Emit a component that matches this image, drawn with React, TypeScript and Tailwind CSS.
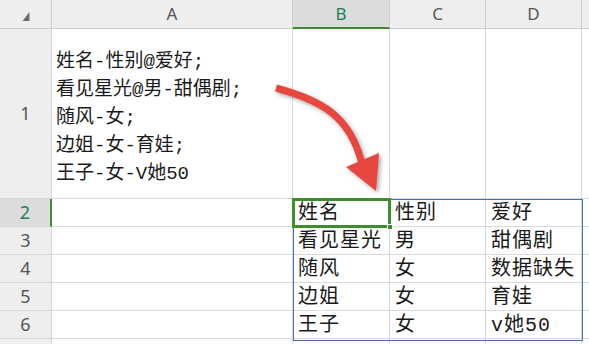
import React from 'react';

const cols = ['A', 'B', 'C', 'D'];

const table: string[][] = [
  ['姓名', '性别', '爱好'],
  ['看见星光', '男', '甜偶剧'],
  ['随风', '女', '数据缺失'],
  ['边姐', '女', '育娃'],
  ['王子', '女', 'v她50'],
];

const a1Lines = ['姓名-性别@爱好;', '看见星光@男-甜偶剧;', '随风-女;', '边姐-女-育娃;', '王子-女-V她50'];

const cellFont = { fontFamily: '"Liberation Mono", "Noto Sans CJK SC", monospace' };
const headFont = { fontFamily: '"Noto Sans", "Liberation Sans", sans-serif' };

const App: React.FC = () => {
  return (
    <div className="relative w-[589px] h-[344px] overflow-hidden bg-white">
      <div className="grid grid-cols-[52px_241px_97px_96px_96px_1fr] grid-rows-[29px_170px_28px_28px_28px_28px_28px_1fr] h-full">
        {/* header row */}
        <div className="bg-[#eeeeee] border-r border-b border-[#cfcfcf] flex items-center justify-center">
          <svg width="52" height="29" viewBox="0 0 52 29">
            <polygon points="23,21 30,12 30,21" fill="#6b6b6b" />
          </svg>
        </div>
        {cols.map((c) => (
          <div
            key={c}
            style={headFont}
            className={
              c === 'B'
                ? 'bg-[#dcdcdc] border-r border-[#cfcfcf] border-b-2 border-b-[#3e8e2e] flex items-center justify-center text-[17px] text-[#1c7f55]'
                : 'bg-[#eeeeee] border-r border-b border-[#cfcfcf] flex items-center justify-center text-[17px] text-[#555555]'
            }
          >
            {c}
          </div>
        ))}
        <div className="bg-[#eeeeee] border-b border-[#cfcfcf]" />

        {/* row 1 */}
        <div style={headFont} className="bg-[#eeeeee] border-r border-b border-[#d6d6d6] flex items-center justify-center text-[18px] text-[#555555]">
          1
        </div>
        <div style={cellFont} className="border-r border-b border-[#dadada] flex flex-col justify-center pl-[4px] pt-[9px] text-[19px] leading-[28px] text-[#1a1a1a]">
          {a1Lines.map((l) => (
            <div key={l} className="whitespace-nowrap">{l}</div>
          ))}
        </div>
        <div className="border-r border-b border-[#dadada]" />
        <div className="border-r border-b border-[#dadada]" />
        <div className="border-r border-b border-[#dadada]" />
        <div className="border-b border-[#dadada]" />

        {/* rows 2-6 */}
        {table.map((row, i) => (
          <React.Fragment key={i}>
            <div
              style={headFont}
              className={
                i === 0
                  ? 'bg-[#dcdcdc] border-r-2 border-r-[#3e8e2e] border-b border-[#d6d6d6] flex items-center justify-center text-[18px] text-[#1c7f55]'
                  : 'bg-[#eeeeee] border-r border-b border-[#d6d6d6] flex items-center justify-center text-[18px] text-[#555555]'
              }
            >
              {i + 2}
            </div>
            <div className="border-r border-b border-[#dadada]" />
            {row.map((t, j) => (
              <div
                key={j}
                style={cellFont}
                className="border-r border-b border-[#dadada] flex items-center pl-[5px] pt-[2px] text-[20px] tracking-[1px] text-[#1a1a1a] whitespace-nowrap overflow-hidden"
              >
                {t}
              </div>
            ))}
            <div className="border-b border-[#dadada]" />
          </React.Fragment>
        ))}

        {/* row 7 (partial) */}
        <div className="bg-[#eeeeee] border-r border-[#d6d6d6]" />
        <div className="border-r border-[#dadada]" />
        <div className="border-r border-[#dadada]" />
        <div className="border-r border-[#dadada]" />
        <div className="border-r border-[#dadada]" />
        <div />
      </div>

      {/* selected range B2:D6 */}
      <div className="absolute left-[293px] top-[199px] w-[290px] h-[142px] border border-[#4a6db3] pointer-events-none" />
      {/* active cell B2 */}
      <div className="absolute left-[292px] top-[198px] w-[99px] h-[30px] border-[3px] border-[#3e8e2e] pointer-events-none" />
      <div className="absolute left-[387px] top-[224px] w-[6px] h-[6px] bg-[#3e8e2e] border border-white pointer-events-none" />

      {/* arrow */}
      <svg
        className="absolute left-0 top-0 pointer-events-none"
        width="589"
        height="344"
        viewBox="0 0 589 344"
        style={{ filter: 'drop-shadow(2px 2px 2px rgba(0,0,0,0.35))' }}
      >
        <path d="M 276 88 C 320 100, 350 115, 362 164" stroke="#e8473f" strokeWidth="7" fill="none" />
        <polygon points="346,167 379,153 376,191" fill="#e8473f" />
      </svg>
    </div>
  );
};

export default App;
